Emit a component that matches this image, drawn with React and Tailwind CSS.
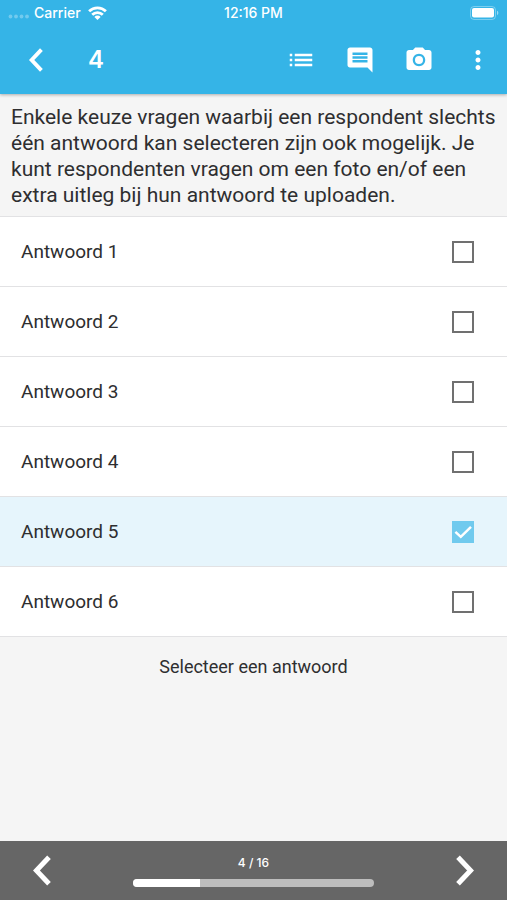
import { useState } from 'react'
import { MdCameraAlt, MdComment, MdList, MdMoreVert } from 'react-icons/md'

const answers = [
  { id: 1, label: 'Antwoord 1' },
  { id: 2, label: 'Antwoord 2' },
  { id: 3, label: 'Antwoord 3' },
  { id: 4, label: 'Antwoord 4' },
  { id: 5, label: 'Antwoord 5' },
  { id: 6, label: 'Antwoord 6' }
]

const actions = [
  { label: 'Overzicht', icon: MdList },
  { label: 'Opmerking', icon: MdComment },
  { label: 'Foto', icon: MdCameraAlt },
  { label: 'Meer', icon: MdMoreVert }
]

function Chevron({ className }) {
  return (
    <svg viewBox="0 0 18 31" className={className} fill="none" stroke="currentColor" strokeWidth="5" aria-hidden="true">
      <path d="M16 2.2 3.4 15.5 16 28.8" />
    </svg>
  )
}

function StatusBar() {
  return (
    <div className="grid h-[26px] grid-cols-3 items-center px-2 text-[14px] leading-5 font-medium">
      <div className="flex items-center">
        <svg viewBox="0 0 22 12" className="mr-1 h-3 w-[22px]" fill="currentColor" fillOpacity="0.3" aria-hidden="true">
          <circle cx="2.5" cy="9.5" r="1.9" />
          <circle cx="8" cy="9.5" r="1.9" />
          <circle cx="13.5" cy="9.5" r="1.9" />
          <circle cx="19" cy="9.5" r="1.9" />
        </svg>
        <span>Carrier</span>
        <svg viewBox="0 0 19 14" className="ml-[7px] h-[14px] w-[19px]" fill="none" stroke="currentColor" strokeWidth="2.8" aria-hidden="true">
          <path d="M1.1 5.3a12 12 0 0 1 16.8 0" />
          <path d="M4.2 8.8a7.6 7.6 0 0 1 10.6 0" />
          <path d="M9.5 14 6.4 10.9a4.3 4.3 0 0 1 6.2 0z" fill="currentColor" stroke="none" />
        </svg>
      </div>
      <span className="text-center">12:16 PM</span>
      <svg viewBox="0 0 29 14" className="ml-auto h-[14px] w-[29px]" aria-hidden="true">
        <rect x="0.5" y="0.5" width="25" height="13" rx="3.5" fill="none" stroke="white" strokeOpacity="0.35" />
        <rect x="2" y="2" width="22" height="9.5" rx="2" fill="white" />
        <path d="M27 4.8v4.4c1.8-.6 1.8-3.8 0-4.4" fill="white" fillOpacity="0.5" />
      </svg>
    </div>
  )
}

function AnswerRow({ answer, checked, onChange }) {
  return (
    <label className={`flex h-[70px] items-center justify-between border-b border-[#e2e2e4] pr-[33px] pl-[21px] text-[19px] leading-[26px] ${checked ? 'bg-[#e6f5fc]' : 'bg-white'}`}>
      <span>{answer.label}</span>
      <span className="relative flex">
        <input
          type="checkbox"
          checked={checked}
          onChange={onChange}
          className="size-[22px] appearance-none border-2 border-[#707070] bg-white checked:border-[#70caee] checked:bg-[#70caee]"
        />
        {checked && (
          <svg viewBox="0 0 22 22" className="pointer-events-none absolute inset-0" fill="none" stroke="white" strokeWidth="2.5" aria-hidden="true">
            <path d="M3.4 10.8 8.8 15.8 19 5.8" />
          </svg>
        )}
      </span>
    </label>
  )
}

export default function App() {
  const [selected, setSelected] = useState(5)

  return (
    <div className="flex min-h-screen flex-col bg-[#f5f5f5] font-['Inter',sans-serif] text-[#2e2e30]">
      <header className="z-10 bg-[#35b4e7] text-white shadow-[0_1px_3px_rgba(0,0,0,0.3)]">
        <StatusBar />
        <div className="flex h-[68px] items-center pr-[14px] pl-5">
          <button type="button" aria-label="Terug" className="flex w-8 justify-center">
            <Chevron className="h-6 w-4" />
          </button>
          <h1 className="ml-9 text-2xl leading-8 font-semibold">4</h1>
          <div className="ml-auto flex gap-[29px]">
            {actions.map(({ label, icon: Icon }) => (
              <button key={label} type="button" aria-label={label}>
                <Icon className="size-[30px]" />
              </button>
            ))}
          </div>
        </div>
      </header>

      <main className="flex-1 font-['Roboto',sans-serif]">
        <p className="border-b border-[#e2e2e4] px-[11px] pt-[10px] pb-2 text-[21px] leading-[26px]">
          Enkele keuze vragen waarbij een respondent slechts één antwoord kan selecteren zijn ook mogelijk. Je kunt respondenten vragen om een foto en/of een extra uitleg bij hun antwoord te uploaden.
        </p>
        <div>
          {answers.map((answer) => (
            <AnswerRow
              key={answer.id}
              answer={answer}
              checked={selected === answer.id}
              onChange={() => setSelected(answer.id)}
            />
          ))}
        </div>
        <p className="pt-[17px] text-center text-[18px] leading-[26px]">Selecteer een antwoord</p>
      </main>

      <footer className="flex h-[59px] items-center justify-between bg-[#666] px-[26px] text-white">
        <button type="button" aria-label="Vorige" className="flex w-8 justify-center">
          <Chevron className="h-[31px] w-[18px]" />
        </button>
        <div className="flex w-[53%] max-w-[242px] flex-col items-center gap-2">
          <span className="text-xs font-medium">4 / 16</span>
          <div className="h-2 w-full overflow-hidden rounded-full bg-[#bdbdbd]">
            <div className="h-full w-[28%] bg-white" />
          </div>
        </div>
        <button type="button" aria-label="Volgende" className="flex w-8 justify-center">
          <Chevron className="h-[31px] w-[18px] rotate-180" />
        </button>
      </footer>
    </div>
  )
}
